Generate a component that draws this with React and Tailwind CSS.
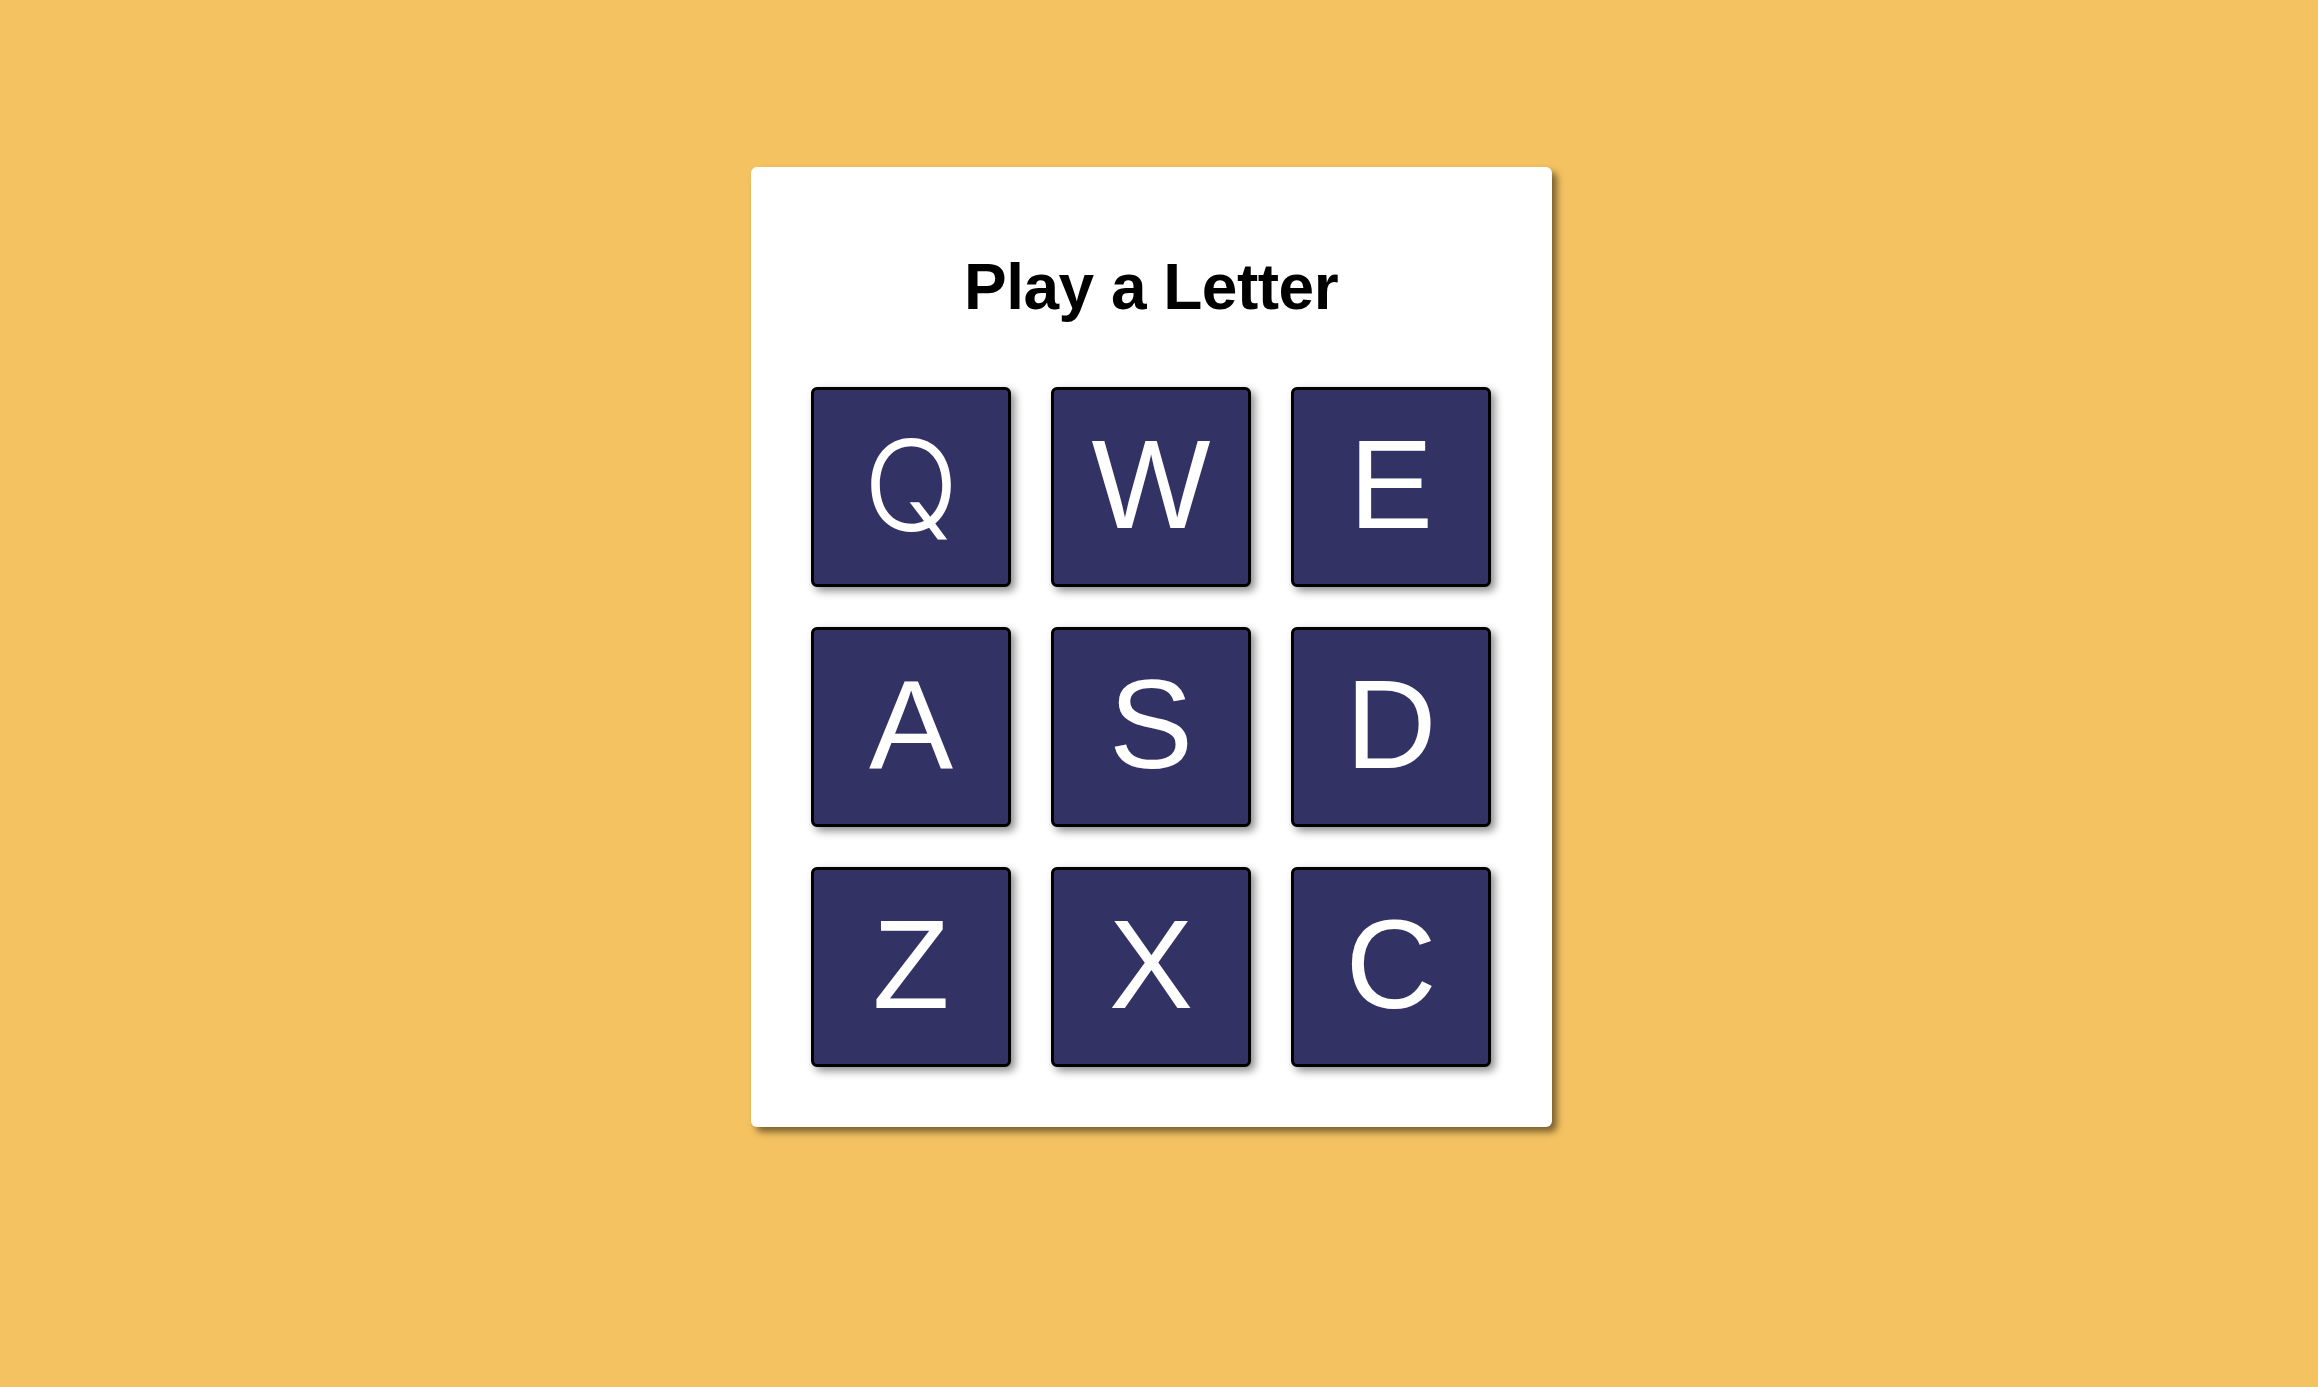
export default function App() {
  const letters = ["Q", "W", "E", "A", "S", "D", "Z", "X", "C"];
  return (
    <div
      className="min-h-screen w-full bg-[#f4c261] flex justify-center pt-[167px] pr-[16px]"
      style={{ fontFamily: '"Liberation Sans", Arial, sans-serif' }}
    >
      <div className="w-[801px] h-[960px] bg-white rounded-[6px] shadow-[5px_5px_7px_rgba(0,0,0,0.5)] pt-[83px] px-[60px] pb-[60px] flex flex-col items-center">
        <h1 className="h-[74px] leading-[74px] text-[64px] font-bold text-black tracking-[-0.5px] mb-[63px]">
          Play a Letter
        </h1>
        <div className="grid grid-cols-[200px_200px_200px] grid-rows-[200px_200px_200px] gap-x-[40px] gap-y-[40px]">
          {letters.map((l) => (
            <button
              key={l}
              className={
                "w-[200px] h-[200px] bg-[#323264] border-[3px] border-black rounded-[6px] shadow-[4px_4px_8px_rgba(0,0,0,0.45)] flex items-center justify-center pb-[4px] text-white text-[126px] leading-none " +
                (l === "Q" ? "font-['Inter',sans-serif] font-light" : "font-['Liberation_Sans',Arial,sans-serif] font-normal")
              }
            >
              {l}
            </button>
          ))}
        </div>
      </div>
    </div>
  );
}
